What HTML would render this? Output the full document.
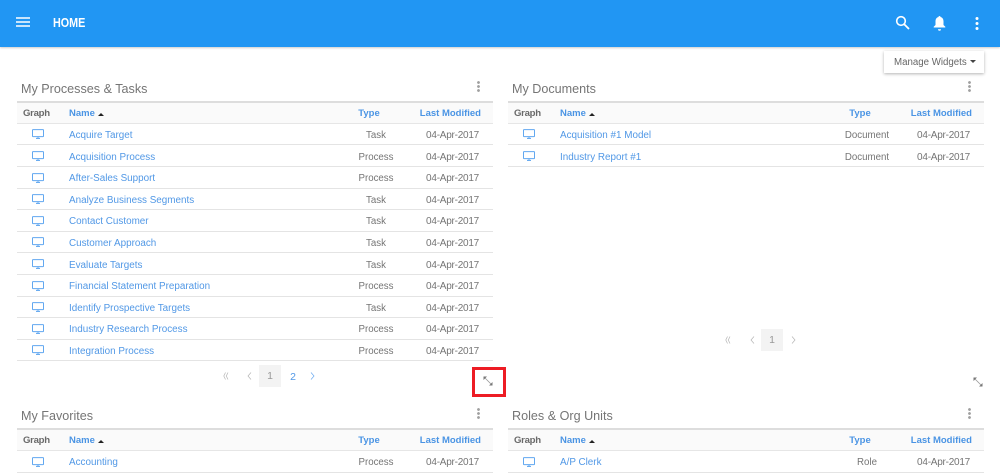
<!DOCTYPE html>
<html><head><meta charset="utf-8">
<style>
html,body{margin:0;padding:0;background:#fff}
body{width:1000px;height:473px;overflow:hidden;position:relative;font-family:"Liberation Sans",sans-serif;font-size:10px;color:#6f6f6f}
.a{position:absolute;white-space:nowrap}
.hdr{position:absolute;left:0;top:0;width:1000px;height:47px;background:#2196f3;box-shadow:0 1px 2px rgba(0,0,0,.2)}
.home{left:53px;top:16px;font-size:13px;font-weight:bold;color:#fff;line-height:14px;transform:scaleX(.83);transform-origin:0 50%}
.mw{left:884px;top:51px;width:100px;height:22px;background:#fff;box-shadow:0 1px 3px rgba(0,0,0,.3);font-size:9.7px;line-height:23px;color:#666;text-indent:10px}
.caret{display:inline-block;border:3.5px solid transparent;border-top:3.5px solid #444;border-bottom:0;margin-left:3px;vertical-align:2px}
.w{position:absolute;width:476px;overflow:visible}
.t{position:absolute;left:4px;font-size:12.6px;line-height:16px;color:#757575}
.th{position:absolute;left:0;width:100%;height:20px;background:#fafafa;border-top:2px solid #ddd;border-bottom:1px solid #e6e6e6}
.c{position:absolute;line-height:14px;white-space:nowrap}
.g{left:6px;font-weight:bold;color:#6a6a6a;font-size:9.6px;letter-spacing:-.3px}
.n{left:52px;font-weight:bold;color:#4a94e4;font-size:9.5px}
.ty{font-weight:bold;color:#4a94e4;font-size:9.5px;width:60px;text-align:center;right:94px}
.lm{right:12px;font-weight:bold;color:#4a94e4;font-size:9.5px}
.sort{display:inline-block;border:3px solid transparent;border-bottom:3.5px solid #222;border-top:0;margin-left:3px;vertical-align:0}
.r{position:absolute;left:0;width:100%;height:21px;border-bottom:1px solid #e4e4e4}
.r a{position:absolute;left:52px;top:5.500px;line-height:14px;color:#5198e6;text-decoration:none;white-space:nowrap;font-size:9.900px}
.r i{position:absolute;right:82px;width:70px;text-align:center;top:5.500px;line-height:14px;font-style:normal;color:#757575;font-size:9.700px}
.r b{position:absolute;right:14px;top:5.500px;line-height:14px;font-weight:normal;color:#757575;white-space:nowrap;font-size:10px;letter-spacing:-.24px}
.r svg{position:absolute;left:15px;top:6px}
.dots{position:absolute;width:3px;height:11px;background:radial-gradient(circle at 1.500px 1.500px,#a0a0a0 1.200px,transparent 1.600px) 0 0/3px 4px repeat-y}
.p{position:absolute;line-height:14px;font-size:10.500px;color:#aaa;text-align:center}
.cur{position:absolute;width:22px;height:22px;background:#f3f3f3;color:#999;text-align:center;line-height:23px;font-size:10.500px}
</style></head><body>
<svg width="0" height="0" style="position:absolute"><defs><symbol id="m" viewBox="0 0 12 10"><path d="M1 .6h10a.5.5 0 0 1 .5.5v6a.5.5 0 0 1-.5.5H1a.5.5 0 0 1-.5-.5v-6a.5.5 0 0 1 .5-.5z" fill="none" stroke="#62a8f0" stroke-width="1"/><path d="M4 9.400h4" stroke="#62a8f0" stroke-width="1.100"/><path d="M5.500 7.600h1v1.600h-1z" fill="#62a8f0"/></symbol></defs></svg>

<div class="hdr"></div>
<svg class="a" style="left:16px;top:17px" width="14" height="10"><path d="M0 1h14M0 5h14M0 9h14" stroke="#fff" stroke-width="1.600"/></svg>
<div class="a home">HOME</div>
<svg class="a" style="left:895px;top:15px" width="16" height="16"><circle cx="6" cy="6" r="4.300" fill="none" stroke="#fff" stroke-width="1.600"/><path d="M9.200 9.200L14 14" stroke="#fff" stroke-width="1.800"/></svg>
<svg class="a" style="left:932px;top:15px" width="15" height="17"><path d="M7.500 1c.7 0 1 .4 1 1 2.200.6 3 2.400 3 4.500v3.500l1.800 1.800v.7H1.700v-.7l1.800-1.800V6.500c0-2.100.8-3.900 3-4.500 0-.6.3-1 1-1z" fill="#fff"/><path d="M6 14.300h3a1.500 1.500 0 0 1-3 0z" fill="#fff"/></svg>
<svg class="a" style="left:975px;top:16px" width="4" height="15"><circle cx="2" cy="2.500" r="1.500" fill="#fff"/><circle cx="2" cy="7.500" r="1.500" fill="#fff"/><circle cx="2" cy="12.500" r="1.500" fill="#fff"/></svg>
<div class="a mw">Manage Widgets<span class="caret"></span></div>

<!-- My Processes -->
<div class="w" style="left:17px;top:0">
<div class="t" style="top:81px">My Processes &amp; Tasks</div>
<div class="dots" style="left:460px;top:81px"></div>
<div class="th" style="top:101px"></div>
<div class="c g" style="top:107px">Graph</div><div class="c n" style="top:107px">Name<span class="sort"></span></div><div class="c ty" style="top:107px">Type</div><div class="c lm" style="top:107px">Last Modified</div>
<div class="r" style="top:123.400px"><svg width="12" height="10"><use href="#m"/></svg><a>Acquire Target</a><i>Task</i><b>04-Apr-2017</b></div>
<div class="r" style="top:145px"><svg width="12" height="10"><use href="#m"/></svg><a>Acquisition Process</a><i>Process</i><b>04-Apr-2017</b></div>
<div class="r" style="top:166.600px"><svg width="12" height="10"><use href="#m"/></svg><a>After-Sales Support</a><i>Process</i><b>04-Apr-2017</b></div>
<div class="r" style="top:188.200px"><svg width="12" height="10"><use href="#m"/></svg><a>Analyze Business Segments</a><i>Task</i><b>04-Apr-2017</b></div>
<div class="r" style="top:209.800px"><svg width="12" height="10"><use href="#m"/></svg><a>Contact Customer</a><i>Task</i><b>04-Apr-2017</b></div>
<div class="r" style="top:231.400px"><svg width="12" height="10"><use href="#m"/></svg><a>Customer Approach</a><i>Task</i><b>04-Apr-2017</b></div>
<div class="r" style="top:253px"><svg width="12" height="10"><use href="#m"/></svg><a>Evaluate Targets</a><i>Task</i><b>04-Apr-2017</b></div>
<div class="r" style="top:274.600px"><svg width="12" height="10"><use href="#m"/></svg><a>Financial Statement Preparation</a><i>Process</i><b>04-Apr-2017</b></div>
<div class="r" style="top:296.200px"><svg width="12" height="10"><use href="#m"/></svg><a>Identify Prospective Targets</a><i>Task</i><b>04-Apr-2017</b></div>
<div class="r" style="top:317.800px"><svg width="12" height="10"><use href="#m"/></svg><a>Industry Research Process</a><i>Process</i><b>04-Apr-2017</b></div>
<div class="r" style="top:339.400px"><svg width="12" height="10"><use href="#m"/></svg><a>Integration Process</a><i>Process</i><b>04-Apr-2017</b></div>
</div>
<svg class="a" style="left:223px;top:372px" width="6" height="8" viewBox="0 0 6 8"><path d="M2.500.5L.8 4l1.700 3.500M5 .5L3.300 4 5 7.500" fill="none" stroke="#b5b5b5" stroke-width=".7"/></svg>
<svg class="a" style="left:247px;top:372px" width="5" height="8" viewBox="0 0 5 8"><path d="M4 .5L1 4l3 3.500" fill="none" stroke="#b5b5b5" stroke-width=".7"/></svg>
<div class="cur" style="left:259px;top:365px">1</div>
<div class="p" style="left:285px;top:370px;width:16px;color:#5198e6">2</div>
<svg class="a" style="left:310px;top:372px" width="5" height="8" viewBox="0 0 5 8"><path d="M1 .5L4 4 1 7.500" fill="none" stroke="#6aaaf0" stroke-width=".7"/></svg>
<div class="a" style="left:472px;top:367px;width:28px;height:24px;border:3px solid #ed1c24"></div>
<svg class="a" style="left:483px;top:376px" width="10" height="10" viewBox="0 0 10 10"><path d="M2 2l6 6" stroke="#999" stroke-width=".8"/><path d="M.5.5h3.500L.5 4zM9.500 9.500H6L9.500 6z" fill="#777"/></svg>

<!-- My Documents -->
<div class="w" style="left:508px;top:0">
<div class="t" style="top:81px">My Documents</div>
<div class="dots" style="left:460px;top:81px"></div>
<div class="th" style="top:101px"></div>
<div class="c g" style="top:107px">Graph</div><div class="c n" style="top:107px">Name<span class="sort"></span></div><div class="c ty" style="top:107px">Type</div><div class="c lm" style="top:107px">Last Modified</div>
<div class="r" style="top:123.400px"><svg width="12" height="10"><use href="#m"/></svg><a>Acquisition #1 Model</a><i>Document</i><b>04-Apr-2017</b></div>
<div class="r" style="top:145px"><svg width="12" height="10"><use href="#m"/></svg><a>Industry Report #1</a><i>Document</i><b>04-Apr-2017</b></div>
</div>
<svg class="a" style="left:725px;top:336px" width="6" height="8" viewBox="0 0 6 8"><path d="M2.500.5L.8 4l1.700 3.500M5 .5L3.300 4 5 7.500" fill="none" stroke="#b5b5b5" stroke-width=".7"/></svg>
<svg class="a" style="left:750px;top:336px" width="5" height="8" viewBox="0 0 5 8"><path d="M4 .5L1 4l3 3.500" fill="none" stroke="#b5b5b5" stroke-width=".7"/></svg>
<div class="cur" style="left:761px;top:329px">1</div>
<svg class="a" style="left:791px;top:336px" width="5" height="8" viewBox="0 0 5 8"><path d="M1 .5L4 4 1 7.500" fill="none" stroke="#b5b5b5" stroke-width=".7"/></svg>
<svg class="a" style="left:973px;top:377px" width="10" height="10" viewBox="0 0 10 10"><path d="M2 2l6 6" stroke="#999" stroke-width=".8"/><path d="M.5.5h3.500L.5 4zM9.500 9.500H6L9.500 6z" fill="#777"/></svg>

<!-- My Favorites -->
<div class="w" style="left:17px;top:0">
<div class="t" style="top:408px">My Favorites</div>
<div class="dots" style="left:460px;top:408px"></div>
<div class="th" style="top:428px"></div>
<div class="c g" style="top:434px">Graph</div><div class="c n" style="top:434px">Name<span class="sort"></span></div><div class="c ty" style="top:434px">Type</div><div class="c lm" style="top:434px">Last Modified</div>
<div class="r" style="top:450.600px"><svg width="12" height="10"><use href="#m"/></svg><a>Accounting</a><i>Process</i><b>04-Apr-2017</b></div>
</div>

<!-- Roles -->
<div class="w" style="left:508px;top:0">
<div class="t" style="top:408px">Roles &amp; Org Units</div>
<div class="dots" style="left:460px;top:408px"></div>
<div class="th" style="top:428px"></div>
<div class="c g" style="top:434px">Graph</div><div class="c n" style="top:434px">Name<span class="sort"></span></div><div class="c ty" style="top:434px">Type</div><div class="c lm" style="top:434px">Last Modified</div>
<div class="r" style="top:450.600px"><svg width="12" height="10"><use href="#m"/></svg><a>A/P Clerk</a><i>Role</i><b>04-Apr-2017</b></div>
</div>
</body></html>
